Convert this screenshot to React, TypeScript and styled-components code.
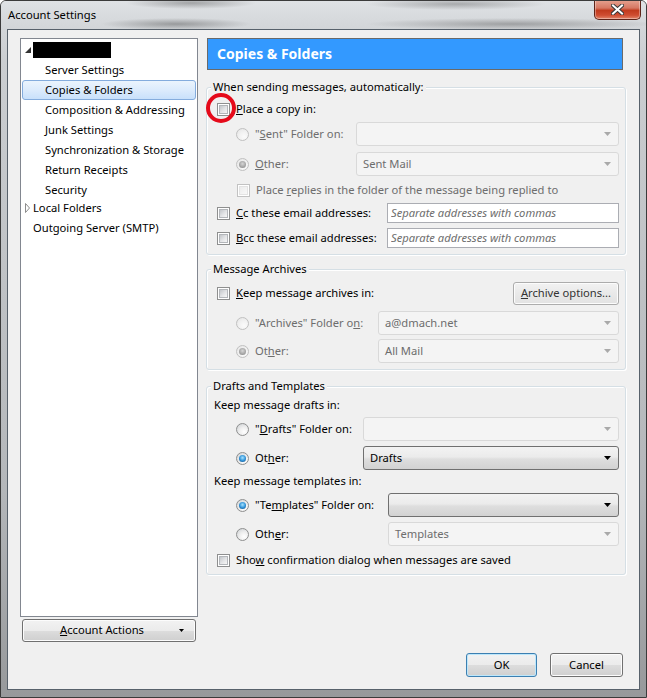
import React from 'react';
import styled, { createGlobalStyle, css } from 'styled-components';

const GlobalStyle = createGlobalStyle`
  html, body {
    margin: 0;
    padding: 0;
    background: #fff;
  }
  body {
    font-family: 'Noto Sans', 'Open Sans', sans-serif;
    font-size: 11.2px;
    color: #000;
  }
  * {
    box-sizing: border-box;
  }
`;

const App = () => {
  return (
    <>
      <GlobalStyle />
      <Window>
        <TitleBar>
          <Title>Account Settings</Title>
          <CloseButton>
            <svg width="13" height="11" viewBox="0 0 13 11">
              <path d="M2 1.5 L11 9.5 M11 1.5 L2 9.5" stroke="#3a3a3a" strokeWidth="4" strokeLinecap="square" />
              <path d="M2 1.5 L11 9.5 M11 1.5 L2 9.5" stroke="#fff" strokeWidth="2" strokeLinecap="square" />
            </svg>
          </CloseButton>
        </TitleBar>
        <Client>
          <Body>
            <Sidebar>
              <Tree>
                <TreeRow $indent={4} $top={1}>
                  <Twisty>
                    <svg width="7" height="7" viewBox="0 0 7 7">
                      <polygon points="6,0 6,6 0,6" fill="#333" />
                    </svg>
                  </Twisty>
                  <Redacted />
                </TreeRow>
                <TreeRow $indent={24}>Server Settings</TreeRow>
                <TreeRow $indent={24} $selected>Copies &amp; Folders</TreeRow>
                <TreeRow $indent={24}>Composition &amp; Addressing</TreeRow>
                <TreeRow $indent={24}>Junk Settings</TreeRow>
                <TreeRow $indent={24}>Synchronization &amp; Storage</TreeRow>
                <TreeRow $indent={24}>Return Receipts</TreeRow>
                <TreeRow $indent={24}>Security</TreeRow>
                <TreeRow $indent={4} $top={-2}>
                  <Twisty>
                    <svg width="6" height="10" viewBox="0 0 6 10">
                      <polygon points="0.5,0.5 4.5,5 0.5,9.5" fill="#fff" stroke="#8c8c8c" />
                    </svg>
                  </Twisty>
                  Local Folders
                </TreeRow>
                <TreeRow $indent={12}>Outgoing Server (SMTP)</TreeRow>
              </Tree>
              <ActionsButton>
                <span>
                  <u>A</u>ccount Actions
                </span>
                <svg width="16" height="4" viewBox="0 0 16 4">
                  <polygon points="0,0 5,0 2.5,3" fill="#000" />
                </svg>
              </ActionsButton>
            </Sidebar>
            <Main>
              <Header>Copies &amp; Folders</Header>

              <Group $top={17} $bottom={6}>
                <GroupTitle>When sending messages, automatically:</GroupTitle>
                <Row $top={4}>
                  <Lead>
                    <Marked>
                      <CheckBox />
                      <Ring />
                    </Marked>
                    <Text>
                      <u>P</u>lace a copy in:
                    </Text>
                  </Lead>
                </Row>
                <Row $top={3} $h={24} $indent={19}>
                  <Lead $w={120} $disabled>
                    <Radio $disabled />
                    <Text>
                      "<u>S</u>ent" Folder on:
                    </Text>
                  </Lead>
                  <Select />
                </Row>
                <Row $top={6} $h={24} $indent={19}>
                  <Lead $w={120} $disabled>
                    <Radio $disabled $checked />
                    <Text>
                      <u>O</u>ther:
                    </Text>
                  </Lead>
                  <Select value="Sent Mail" />
                </Row>
                <Row $top={4} $indent={20}>
                  <Lead $disabled>
                    <CheckBox $disabled />
                    <Text>
                      Place <u>r</u>eplies in the folder of the message being replied to
                    </Text>
                  </Lead>
                </Row>
                <Row $top={3}>
                  <Lead $w={170}>
                    <CheckBox />
                    <Text>
                      <u>C</u>c these email addresses:
                    </Text>
                  </Lead>
                  <AddressInput placeholder="Separate addresses with commas" />
                </Row>
                <Row $top={5}>
                  <Lead $w={170}>
                    <CheckBox />
                    <Text>
                      <u>B</u>cc these email addresses:
                    </Text>
                  </Lead>
                  <AddressInput placeholder="Separate addresses with commas" />
                </Row>
              </Group>

              <Group $top={14} $bottom={6}>
                <GroupTitle>Message Archives</GroupTitle>
                <Row $top={5} $h={23}>
                  <Lead>
                    <CheckBox />
                    <Text>
                      <u>K</u>eep message archives in:
                    </Text>
                  </Lead>
                  <PushButton $w={106} $flat>
                    <u>A</u>rchive options...
                  </PushButton>
                </Row>
                <Row $top={6} $h={24} $indent={19}>
                  <Lead $w={142} $disabled>
                    <Radio $disabled />
                    <Text>
                      "Archives" Folder o<u>n</u>:
                    </Text>
                  </Lead>
                  <Select value="a@dmach.net" />
                </Row>
                <Row $top={4} $h={24} $indent={19}>
                  <Lead $w={142} $disabled>
                    <Radio $disabled $checked />
                    <Text>
                      Ot<u>h</u>er:
                    </Text>
                  </Lead>
                  <Select value="All Mail" />
                </Row>
              </Group>

              <Group $top={16} $bottom={4}>
                <GroupTitle>Drafts and Templates</GroupTitle>
                <Row $top={1} $indent={-3}>
                  <Lead>
                    <Text>Keep message drafts in:</Text>
                  </Lead>
                </Row>
                <Row $top={2} $h={24} $indent={19}>
                  <Lead $w={127}>
                    <Radio />
                    <Text>
                      "<u>D</u>rafts" Folder on:
                    </Text>
                  </Lead>
                  <Select />
                </Row>
                <Row $top={5} $h={24} $indent={19}>
                  <Lead $w={127}>
                    <Radio $checked />
                    <Text>
                      Ot<u>h</u>er:
                    </Text>
                  </Lead>
                  <Select value="Drafts" $enabled />
                </Row>
                <Row $top={1} $indent={-3}>
                  <Lead>
                    <Text>Keep message templates in:</Text>
                  </Lead>
                </Row>
                <Row $top={2} $h={24} $indent={19}>
                  <Lead $w={152}>
                    <Radio $checked />
                    <Text>
                      "Te<u>m</u>plates" Folder on:
                    </Text>
                  </Lead>
                  <Select $enabled />
                </Row>
                <Row $top={5} $h={24} $indent={19}>
                  <Lead $w={152}>
                    <Radio />
                    <Text>
                      Oth<u>e</u>r:
                    </Text>
                  </Lead>
                  <Select value="Templates" />
                </Row>
                <Row $top={4}>
                  <Lead>
                    <CheckBox />
                    <Text>
                      Sho<u>w</u> confirmation dialog when messages are saved
                    </Text>
                  </Lead>
                </Row>
              </Group>
            </Main>
          </Body>
          <Footer>
            <PushButton $w={71} $h={24} $default>
              OK
            </PushButton>
            <PushButton $w={73} $h={24}>
              Cancel
            </PushButton>
          </Footer>
        </Client>
      </Window>
    </>
  );
};

interface SelectProps {
  value?: string;
  $enabled?: boolean;
}

const Select = ({ value, $enabled }: SelectProps) => (
  <SelectBox $enabled={$enabled}>
    <Text>{value}</Text>
    <svg width="7" height="4" viewBox="0 0 7 4">
      <polygon points="0,0 7,0 3.5,4" fill={$enabled ? '#000' : '#a9a9a9'} />
    </svg>
  </SelectBox>
);

export default App;

const Window = styled.div`
  width: 647px;
  height: 698px;
  display: flex;
  flex-direction: column;
  border: 1px solid #3b3b3b;
  border-radius: 6px 6px 0 0;
  background: linear-gradient(180deg, #d9dcdf 0%, #cbced1 60px, #b4b7ba 70%, #97999b 100%);
  overflow: hidden;
`;

const TitleBar = styled.div`
  height: 28px;
  flex: none;
  display: flex;
  align-items: flex-start;
  padding-left: 7px;
  background:
    radial-gradient(ellipse 65px 6px at 190px 2px, rgba(55, 55, 55, 0.36), transparent),
    radial-gradient(ellipse 90px 6px at 455px 3px, rgba(55, 55, 55, 0.32), transparent),
    radial-gradient(ellipse 75px 6px at 175px 23px, rgba(55, 55, 55, 0.38), transparent),
    radial-gradient(ellipse 145px 6px at 510px 23px, rgba(55, 55, 55, 0.34), transparent),
    linear-gradient(180deg, #dfe2e5, #d2d5d8);
`;

const Title = styled.div`
  line-height: 14px;
  margin-top: 7px;
  color: #000;
`;

const CloseButton = styled.div`
  width: 47px;
  height: 20px;
  margin: -1px 5px 0 auto;
  display: flex;
  align-items: center;
  justify-content: center;
  border: 1px solid #5e2419;
  border-top: none;
  border-radius: 0 0 5px 5px;
  background: linear-gradient(180deg, #e6a391 0%, #d67863 42%, #c13b1e 55%, #cf4d31 80%, #e2866b 100%);
  box-shadow: inset 0 0 0 1px rgba(255, 255, 255, 0.35);
`;

const Client = styled.div`
  flex: 1;
  display: flex;
  flex-direction: column;
  margin: 0 6px 7px 6px;
  border: 1px solid #57616b;
  background: #f0f0f0;
`;

const Body = styled.div`
  flex: 1;
  display: flex;
  padding: 8px 0 0 12px;
`;

const Sidebar = styled.div`
  width: 178px;
  display: flex;
  flex-direction: column;
`;

const Tree = styled.div`
  height: 579px;
  border: 1px solid #828790;
  background: #fff;
  display: flex;
  flex-direction: column;
`;

const TreeRow = styled.div<{ $indent: number; $top?: number; $selected?: boolean }>`
  height: 20px;
  flex: none;
  display: flex;
  align-items: center;
  margin: ${({ $top }) => $top ?? 0}px 0 0;
  padding: 0 0 2px ${({ $indent }) => $indent}px;
  white-space: nowrap;
  ${({ $selected, $indent }) =>
    $selected &&
    css`
      margin: 0 1px;
      padding-left: ${$indent - 2}px;
      border: 1px solid #84acdd;
      border-radius: 3px;
      background: linear-gradient(180deg, #ebf4fd 0%, #dcebfc 50%, #c8e0fb 100%);
    `}
`;

const Twisty = styled.span`
  width: 8px;
  display: flex;
  align-items: center;
  justify-content: flex-start;
  margin-top: 2px;
`;

const Redacted = styled.span`
  width: 78px;
  height: 16px;
  margin-top: 2px;
  background: #000;
`;

const ActionsButton = styled.button`
  margin: 2px 0 0 2px;
  width: 174px;
  height: 23px;
  display: flex;
  align-items: center;
  padding: 0 0 2px 2px;
  font: inherit;
  color: #000;
  border: 1px solid #707070;
  border-radius: 3px;
  background: linear-gradient(180deg, #f2f2f2 0%, #ebebeb 50%, #dddddd 50%, #cfcfcf 100%);
  box-shadow: inset 0 0 0 1px #fcfcfc;
  span {
    flex: 1;
    text-align: center;
  }
  svg {
    margin-top: 2px;
  }
`;

const Main = styled.div`
  margin-left: 7px;
  width: 421px;
  display: flex;
  flex-direction: column;
`;

const Header = styled.div`
  margin-left: 2px;
  width: 416px;
  height: 32px;
  flex: none;
  display: flex;
  align-items: center;
  padding: 0 0 1px 9px;
  background: #3399ff;
  border: 1px solid #6a6a6a;
  color: #fff;
  font-weight: bold;
  font-size: 14px;
`;

const Group = styled.div<{ $top: number; $bottom: number }>`
  margin: ${({ $top }) => $top}px 0 0 1px;
  display: flex;
  flex-direction: column;
  padding: 0 6px ${({ $bottom }) => $bottom}px 10px;
  border: 1px solid #d5dfe5;
  border-radius: 3px;
  box-shadow: inset 1px 1px 0 #fff, 1px 1px 0 #fff;
`;

const GroupTitle = styled.div`
  align-self: flex-start;
  margin: -9px 0 -1px -6px;
  padding: 0 2px 1px;
  line-height: 16px;
  background: #f0f0f0;
`;

const Row = styled.div<{ $top: number; $h?: number; $indent?: number }>`
  display: flex;
  align-items: center;
  flex: none;
  margin-top: ${({ $top }) => $top}px;
  margin-left: ${({ $indent }) => $indent ?? 0}px;
  height: ${({ $h }) => $h ?? 20}px;
`;

const Lead = styled.label<{ $w?: number; $disabled?: boolean }>`
  display: flex;
  align-items: center;
  gap: 6px;
  height: 100%;
  white-space: nowrap;
  flex: ${({ $w }) => ($w ? 'none' : '1')};
  width: ${({ $w }) => ($w ? `${$w}px` : 'auto')};
  color: ${({ $disabled }) => ($disabled ? '#6d6d6d' : '#000')};
`;

const Text = styled.span`
  padding-bottom: 2px;
`;

const Marked = styled.span`
  position: relative;
  display: flex;
`;

const Ring = styled.span`
  position: absolute;
  left: -11px;
  top: -10px;
  width: 30px;
  height: 30px;
  border: 4px solid #e50a1a;
  border-radius: 50%;
`;

const CheckBox = styled.span<{ $disabled?: boolean }>`
  position: relative;
  flex: none;
  width: 13px;
  height: 13px;
  border: 1px solid ${({ $disabled }) => ($disabled ? '#c2c2c2' : '#8e8f8f')};
  background: #fff;
  &::after {
    content: '';
    position: absolute;
    inset: 1px;
    border: 1px solid ${({ $disabled }) => ($disabled ? '#e3e3e3' : '#b3b6ba')};
    background: ${({ $disabled }) =>
      $disabled
        ? 'linear-gradient(135deg, #ececec 0%, #f8f8f8 100%)'
        : 'linear-gradient(135deg, #c3c6ca 0%, #e4e5e7 55%, #f6f6f6 100%)'};
  }
`;

const Radio = styled.span<{ $checked?: boolean; $disabled?: boolean }>`
  position: relative;
  flex: none;
  width: 13px;
  height: 13px;
  border-radius: 50%;
  border: 1px solid ${({ $disabled }) => ($disabled ? '#c0c0c0' : '#8e8f8f')};
  background: ${({ $disabled }) =>
    $disabled
      ? 'radial-gradient(circle at 65% 70%, #fbfbfb 0%, #f2f2f2 45%, #e2e2e2 100%)'
      : 'radial-gradient(circle at 65% 70%, #ffffff 0%, #eeeeee 45%, #c8ccd0 100%)'};
  ${({ $checked, $disabled }) =>
    $checked &&
    css`
      &::after {
        content: '';
        position: absolute;
        left: 2px;
        top: 2px;
        width: 7px;
        height: 7px;
        border-radius: 50%;
        background: ${$disabled
          ? 'radial-gradient(circle at 50% 40%, #d6d6d6 0%, #a4a4a4 60%, #7d7d7d 100%)'
          : 'radial-gradient(circle at 50% 40%, #a8e4ff 0%, #2c8fd6 55%, #103f6e 100%)'};
      }
    `}
`;

const SelectBox = styled.div<{ $enabled?: boolean }>`
  flex: 1;
  height: 100%;
  display: flex;
  align-items: center;
  justify-content: space-between;
  padding: 0 7px 0 6px;
  border-radius: 3px;
  white-space: nowrap;
  ${({ $enabled }) =>
    $enabled
      ? css`
          border: 1px solid #707070;
          background: linear-gradient(180deg, #f3f3f3 0%, #ebebeb 45%, #dedede 55%, #d2d2d2 100%);
          color: #000;
        `
      : css`
          border: 1px solid #d9d9d9;
          background: #f4f4f4;
          color: #6d6d6d;
        `}
`;

const AddressInput = styled.input`
  flex: 1;
  min-width: 0;
  height: 20px;
  padding: 0 0 2px 3px;
  border: 1px solid #abadb3;
  background: #fff;
  font: inherit;
  outline: none;
  &::placeholder {
    font-style: italic;
    color: #6d6d6d;
  }
`;

const PushButton = styled.button<{ $w: number; $h?: number; $flat?: boolean; $default?: boolean }>`
  flex: none;
  width: ${({ $w }) => $w}px;
  height: ${({ $h }) => ($h ? `${$h}px` : '100%')};
  padding: 0 0 2px;
  font: inherit;
  color: #000;
  border: 1px solid #707070;
  border-radius: 3px;
  background: linear-gradient(180deg, #f2f2f2 0%, #ebebeb 50%, #dddddd 50%, #cfcfcf 100%);
  box-shadow: inset 0 0 0 1px #fcfcfc;
  ${({ $flat }) =>
    $flat &&
    css`
      border-color: #acacac;
      color: #333;
      background: linear-gradient(180deg, #f2f2f2 0%, #e9e9e9 50%, #e2e2e2 100%);
    `}
  ${({ $default }) =>
    $default &&
    css`
      border-color: #3c7fb1;
      box-shadow: inset 0 0 0 1px #bde7fb;
    `}
`;

const Footer = styled.div`
  flex: none;
  display: flex;
  justify-content: flex-end;
  gap: 13px;
  padding: 0 16px 12px 0;
`;
